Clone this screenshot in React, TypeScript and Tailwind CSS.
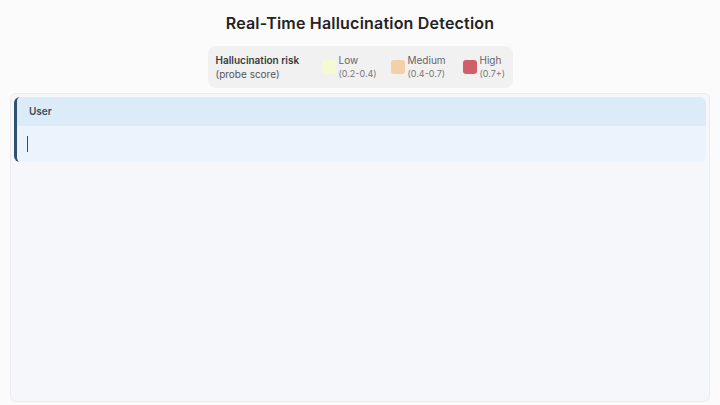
import React from "react";

export default function App() {
  const items = [
    { c: "bg-[#f6fad3]", l: "Low", r: "(0.2-0.4)" },
    { c: "bg-[#f2d1a9]", l: "Medium", r: "(0.4-0.7)" },
    { c: "bg-[#cf606a]", l: "High", r: "(0.7+)" },
  ];
  return (
    <div
      className="w-[720px] h-[405px] bg-[#fbfbfb] flex flex-col items-center overflow-hidden"
      style={{ fontFamily: "Inter, 'Noto Sans', sans-serif" }}
    >
      <h1 className="mt-[13px] text-[16px] leading-[21px] font-semibold text-[#232323] tracking-[0.2px]">
        Real-Time Hallucination Detection
      </h1>
      <div className="mt-[12px] w-[305px] h-[42px] rounded-lg bg-[#f1f1f2] flex items-center pl-[8px] pr-[8px] whitespace-nowrap">
        <div className="flex flex-col leading-[14px] w-[106px] shrink-0">
          <span className="text-[10px] font-semibold text-[#3a3a3a]">Hallucination risk</span>
          <span className="text-[10px] text-[#555]">(probe score)</span>
        </div>
        <div className="flex items-center">
          {items.map((it, i) => (
            <div
              key={it.l}
              className={`flex items-center gap-[3px] shrink-0 ${i === 0 ? "w-[69px]" : i === 1 ? "w-[72px]" : ""}`}
            >
              <div className={`w-[14px] h-[14px] rounded-[3px] shrink-0 ${it.c}`} />
              <div className="flex flex-col leading-[13px]">
                <span className="text-[10px] text-[#666]">{it.l}</span>
                <span className="text-[9px] text-[#777]">{it.r}</span>
              </div>
            </div>
          ))}
        </div>
      </div>
      <div className="mt-[5px] w-[700px] flex-1 mb-[3px] rounded-md border border-[#ececee] bg-[#f5f7fa] p-[3px]">
        <div className="rounded-md border-l-[3px] border-[#2f5070] overflow-hidden">
          <div className="h-[29px] bg-[#dcebf8] flex items-center pl-[12px] text-[10px] font-semibold text-[#3d4a58]">
            User
          </div>
          <div className="h-[36px] bg-[#ebf4fc] flex items-center pl-[10px]">
            <div className="w-[1px] h-[16px] bg-[#3a4a5a]" />
          </div>
        </div>
      </div>
    </div>
  );
}
